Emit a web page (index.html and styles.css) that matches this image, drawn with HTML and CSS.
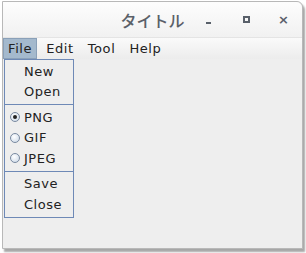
FILE: index.html
```html
<!DOCTYPE html>
<html lang="ja">
<head>
  <meta charset="UTF-8" />
  <title>タイトル</title>
  <link rel="stylesheet" href="styles.css">
</head>
<body>
  <div class="window">
    <div class="titlebar">
      <span class="title">タイトル</span>
      <div class="controls">
        <span class="ctl ctl-min"></span>
        <span class="ctl ctl-max"></span>
        <span class="ctl ctl-close">×</span>
      </div>
    </div>
    <div class="menubar">
      <span class="menu active">File</span>
      <span class="menu">Edit</span>
      <span class="menu">Tool</span>
      <span class="menu">Help</span>
    </div>
    <div class="content">
      <div class="popup">
        <div class="item">New</div>
        <div class="item">Open</div>
        <div class="sep"></div>
        <div class="item radio checked">PNG</div>
        <div class="item radio">GIF</div>
        <div class="item radio">JPEG</div>
        <div class="sep"></div>
        <div class="item">Save</div>
        <div class="item">Close</div>
      </div>
    </div>
  </div>
</body>
</html>
```

FILE: styles.css
```css
body {
  margin: 0;
  background: #ffffff;
  font-family: "DejaVu Sans", sans-serif;
  width: 306px;
  height: 253px;
  overflow: hidden;
}

.window {
  margin: 1px 0 0 2px;
  width: 299px;
  height: 246px;
  border: 1px solid #b8b8b8;
  border-radius: 0 6px 0 0;
  background: #eeeeee;
  box-shadow: 2px 3px 2px rgba(0, 0, 0, 0.35);
  display: flex;
  flex-direction: column;
}

.titlebar {
  height: 35px;
  display: flex;
  align-items: center;
  position: relative;
  background: linear-gradient(#fdfdfd, #f1f1f1);
  border-radius: 0 6px 0 0;
}

.title {
  flex: 1;
  text-align: center;
  font-size: 16px;
  font-weight: 500;
  color: #5a6068;
  font-family: "Noto Sans CJK JP", "DejaVu Sans", sans-serif;
}

.controls {
  position: absolute;
  right: 0;
  top: 0;
  height: 35px;
  display: flex;
  align-items: center;
}

.ctl {
  width: 37px;
  display: flex;
  justify-content: center;
  align-items: center;
  height: 20px;
  color: #59606a;
}

.ctl-min::before {
  content: "";
  width: 5px;
  height: 2px;
  margin-top: 7px;
  margin-right: 2px;
  background: #59606a;
}

.ctl-max::before {
  content: "";
  width: 3px;
  height: 3px;
  border: 2px solid #59606a;
}

.ctl-close {
  font-size: 13px;
  font-weight: bold;
}

.menubar {
  height: 21px;
  display: flex;
  align-items: stretch;
  background: linear-gradient(#fafafa, #ececec);
  border-top: 1px solid #e4e4e4;
  font-size: 13px;
  color: #222222;
}

.menu {
  display: flex;
  align-items: center;
  padding: 0 6px 0 6px;
  letter-spacing: 0.6px;
  border: 1px solid transparent;
}

.menu.active {
  background: #a4b9cd;
  border-color: #8aa0b8;
  padding: 0 4px 0 4px;
  margin-right: 2px;
}

.content {
  flex: 1;
  position: relative;
}

.popup {
  position: absolute;
  left: 1px;
  top: 0;
  width: 68px;
  border: 1px solid #6e89b6;
  background: #eeeeee;
  font-size: 13px;
  color: #222222;
  padding: 1px 0 2px;
}

.item {
  height: 20.5px;
  display: flex;
  align-items: center;
  padding-left: 19px;
  letter-spacing: 0.5px;
}

.radio {
  position: relative;
}

.radio::before {
  content: "";
  position: absolute;
  left: 5px;
  top: 5px;
  width: 8px;
  height: 8px;
  border: 1px solid #7a8aa0;
  border-radius: 50%;
  background: radial-gradient(circle at 40% 35%, #ffffff, #c8d6e6);
}

.radio.checked::after {
  content: "";
  position: absolute;
  left: 8px;
  top: 8px;
  width: 4px;
  height: 4px;
  border-radius: 50%;
  background: #222222;
}

.sep {
  height: 1px;
  background: #6e89b6;
  margin: 2px 0;
}
```
